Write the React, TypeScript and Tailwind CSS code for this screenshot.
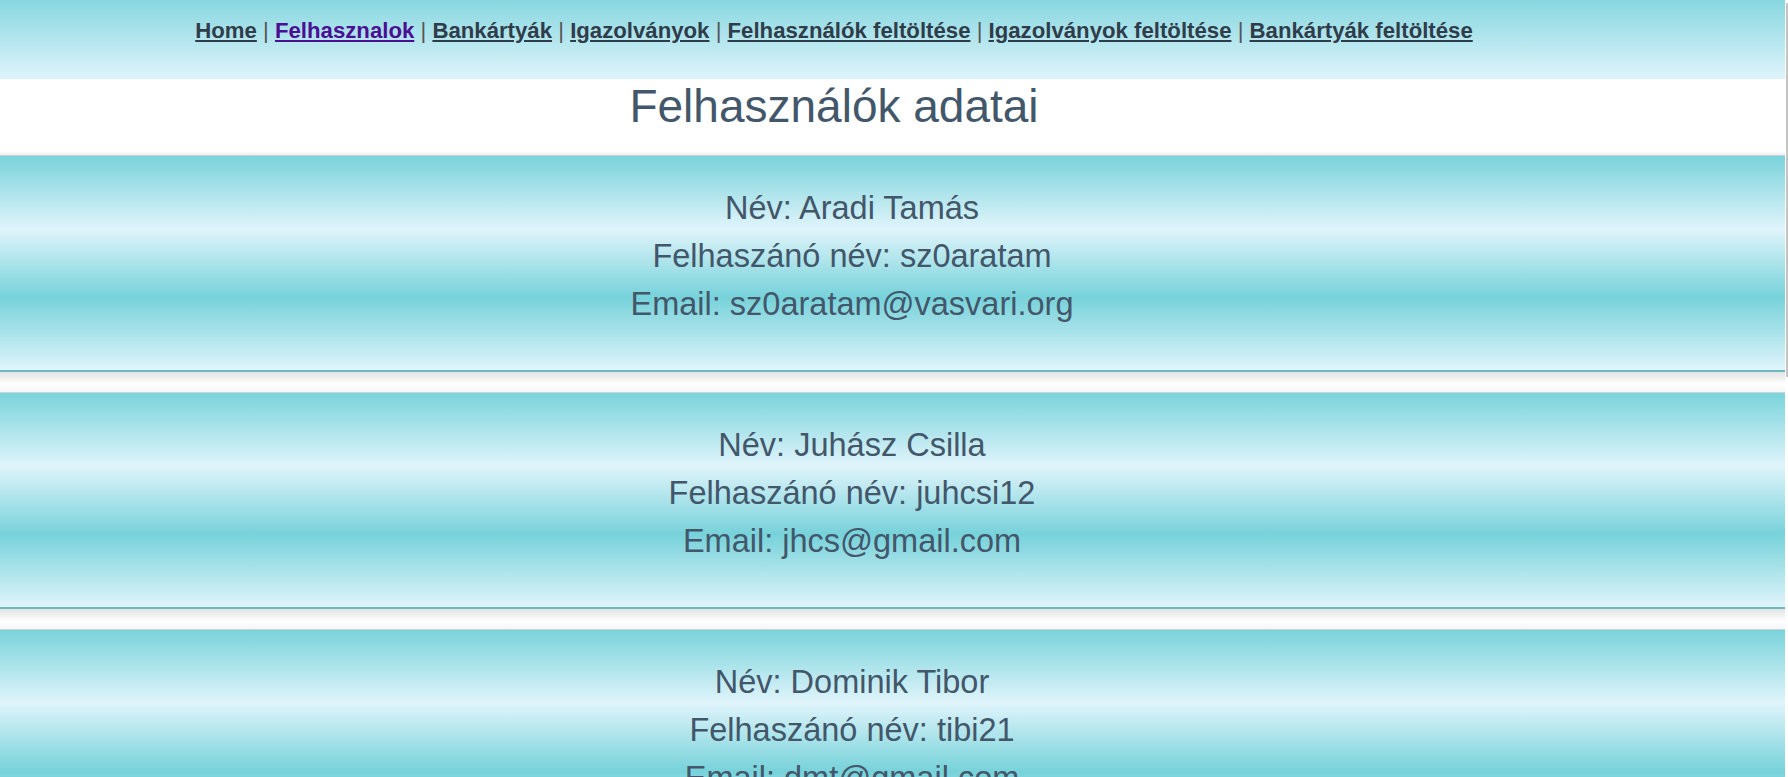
import React from 'react';

const links = [
  { label: 'Home', active: false },
  { label: 'Felhasznalok', active: true },
  { label: 'Bankártyák', active: false },
  { label: 'Igazolványok', active: false },
  { label: 'Felhasználók feltöltése', active: false },
  { label: 'Igazolványok feltöltése', active: false },
  { label: 'Bankártyák feltöltése', active: false },
];

const users = [
  { name: 'Aradi Tamás', username: 'sz0aratam', email: 'sz0aratam@vasvari.org' },
  { name: 'Juhász Csilla', username: 'juhcsi12', email: 'jhcs@gmail.com' },
  { name: 'Dominik Tibor', username: 'tibi21', email: 'dmt@gmail.com' },
];

const UserCard: React.FC<{ name: string; username: string; email: string }> = ({ name, username, email }) => (
  <>
    <div className="h-[217px] shrink-0 border-t border-b-2 border-t-[#c9d6d9] border-b-[#6db8c1] bg-[linear-gradient(to_bottom,#7ad3db_0%,#e0f4fb_34%,#77d2da_66%,#e0f4fb_100%)] pt-[28px] pr-[81px] text-center text-[32.5px] leading-[48px] text-[#43576b]">
      <p>Név: {name}</p>
      <p>Felhaszánó név: {username}</p>
      <p>Email: {email}</p>
    </div>
    <div className="h-[20px] shrink-0 bg-[linear-gradient(to_bottom,#e3e3e3,#ffffff_60%,#f6f6f6)]" />
  </>
);

export default function App() {
  return (
    <div className="flex h-screen w-full overflow-hidden bg-white font-['Liberation_Sans',Arial,sans-serif]">
      <div className="flex min-w-0 flex-1 flex-col">
        {/* menü */}
        <nav className="h-[79px] shrink-0 bg-[linear-gradient(to_bottom,#88d7e0,#dff4fb)] pt-[17px] pr-[117px] text-center text-[22.2px] leading-[28px] text-[#555]">
          {links.map((l, i) => (
            <React.Fragment key={l.label}>
              {i > 0 && <span> | </span>}
              <a
                href="#"
                className={`font-bold underline ${l.active ? 'text-[#4b0f94]' : 'text-[#2f3d4a]'}`}
              >
                {l.label}
              </a>
            </React.Fragment>
          ))}
        </nav>

        <h1 className="h-[76px] shrink-0 bg-[linear-gradient(to_bottom,#ffffff_95%,#ececec)] pr-[117px] text-center text-[46px] font-normal leading-[54px] text-[#43576b]">
          Felhasználók adatai
        </h1>

        {users.map((u) => (
          <UserCard key={u.username} {...u} />
        ))}
      </div>
      {/* görgetősáv */}
      <div className="flex w-[3px] shrink-0 justify-end bg-white">
        <div className="mt-[3px] h-[374px] w-[2px] bg-[#c4c4c4]" />
      </div>
    </div>
  );
}
